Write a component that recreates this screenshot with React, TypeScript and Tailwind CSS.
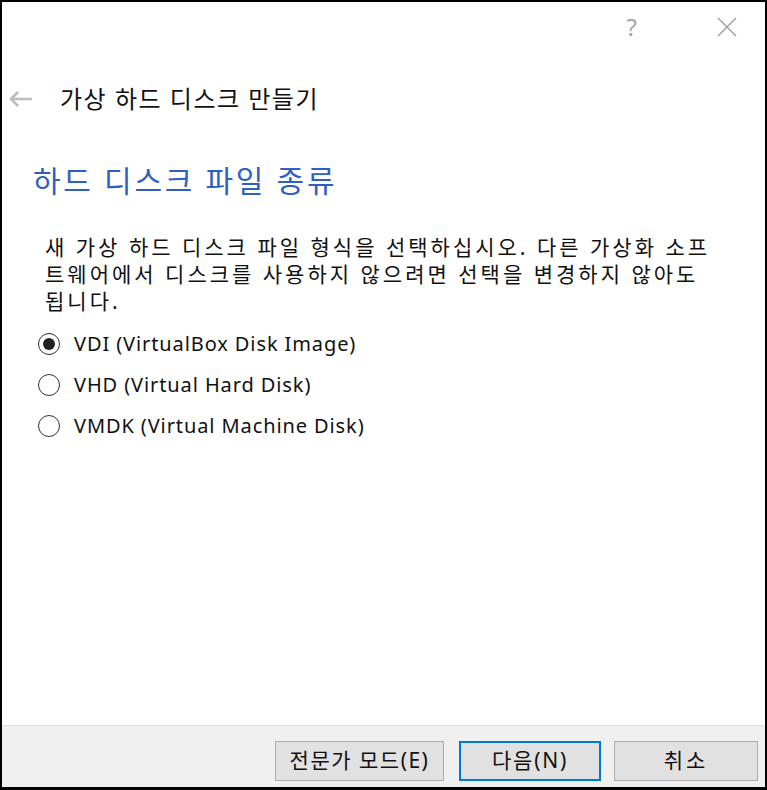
import React from "react";

const font = { fontFamily: '"Noto Sans", "Noto Sans CJK KR", sans-serif' };

const options = [
  "VDI (VirtualBox Disk Image)",
  "VHD (Virtual Hard Disk)",
  "VMDK (Virtual Machine Disk)",
];

const Radio = ({ checked }: { checked: boolean }) => (
  <span className="flex items-center justify-center w-[22px] h-[22px] rounded-full border-[1.5px] border-[#333] bg-white">
    {checked && <span className="w-[12px] h-[12px] rounded-full bg-[#222]" />}
  </span>
);

const App = () => {
  const [picked, setPicked] = React.useState(0);

  return (
    <div
      className="w-[767px] h-[790px] bg-white border-2 border-b-[3px] border-black flex flex-col text-[#111]"
      style={font}
    >
      <div className="h-[48px] flex items-center justify-end pr-[28px] gap-[80px] text-[#a5a5a5]">
        <span className="text-[24px] leading-none mt-[2px]">?</span>
        <svg width="20" height="20" viewBox="0 0 20 20" className="mt-[2px]">
          <path d="M1 1 L19 19 M19 1 L1 19" stroke="#9a9a9a" strokeWidth="1.3" fill="none" />
        </svg>
      </div>

      <div className="flex items-center mt-[34px] h-[30px]">
        <svg width="26" height="16" viewBox="0 0 26 16" className="ml-[6px]">
          <path d="M24 8 H3 M10 1 L3 8 L10 15" stroke="#bdbdbd" strokeWidth="2.6" fill="none" />
        </svg>
        <span className="ml-[26px] text-[24px] leading-none tracking-[1.5px]">가상 하드 디스크 만들기</span>
      </div>

      <div className="flex-1 pl-[31px] pr-[20px]">
        <h1 className="mt-[52px] text-[30px] leading-none tracking-[2.7px] text-[#2f5fc4]">
          하드 디스크 파일 종류
        </h1>

        <p className="mt-[38px] ml-[12px] text-[21px] leading-[27px] tracking-[3px] whitespace-nowrap">
          새 가상 하드 디스크 파일 형식을 선택하십시오. 다른 가상화 소프
          <br />
          트웨어에서 디스크를 사용하지 않으려면 선택을 변경하지 않아도
          <br />
          됩니다.
        </p>

        <div className="mt-[18px] flex flex-col gap-[19px] ml-[5px]">
          {options.map((o, i) => (
            <label
              key={o}
              className="flex items-center gap-[14px] h-[22px] cursor-pointer"
              onClick={() => setPicked(i)}
            >
              <Radio checked={picked === i} />
              <span className="text-[20px] leading-none tracking-[0.9px]">{o}</span>
            </label>
          ))}
        </div>
      </div>

      <div className="h-[62px] bg-[#f0f0f0] border-t border-[#dedede] flex justify-end items-start pt-[15px] pr-[7px]">
        <button className="h-[40px] w-[169px] bg-[#e1e1e1] border border-[#adadad] text-[21px] tracking-[1.5px]">
          전문가 모드(E)
        </button>
        <button className="h-[40px] w-[142px] ml-[15px] bg-[#e1e1e1] border-2 border-[#0078d7] text-[21px] tracking-[1.8px]">
          다음(N)
        </button>
        <button className="h-[40px] w-[144px] ml-[13px] bg-[#e1e1e1] border border-[#adadad] text-[21px] tracking-[3px]">
          취소
        </button>
      </div>
    </div>
  );
};

export default App;
